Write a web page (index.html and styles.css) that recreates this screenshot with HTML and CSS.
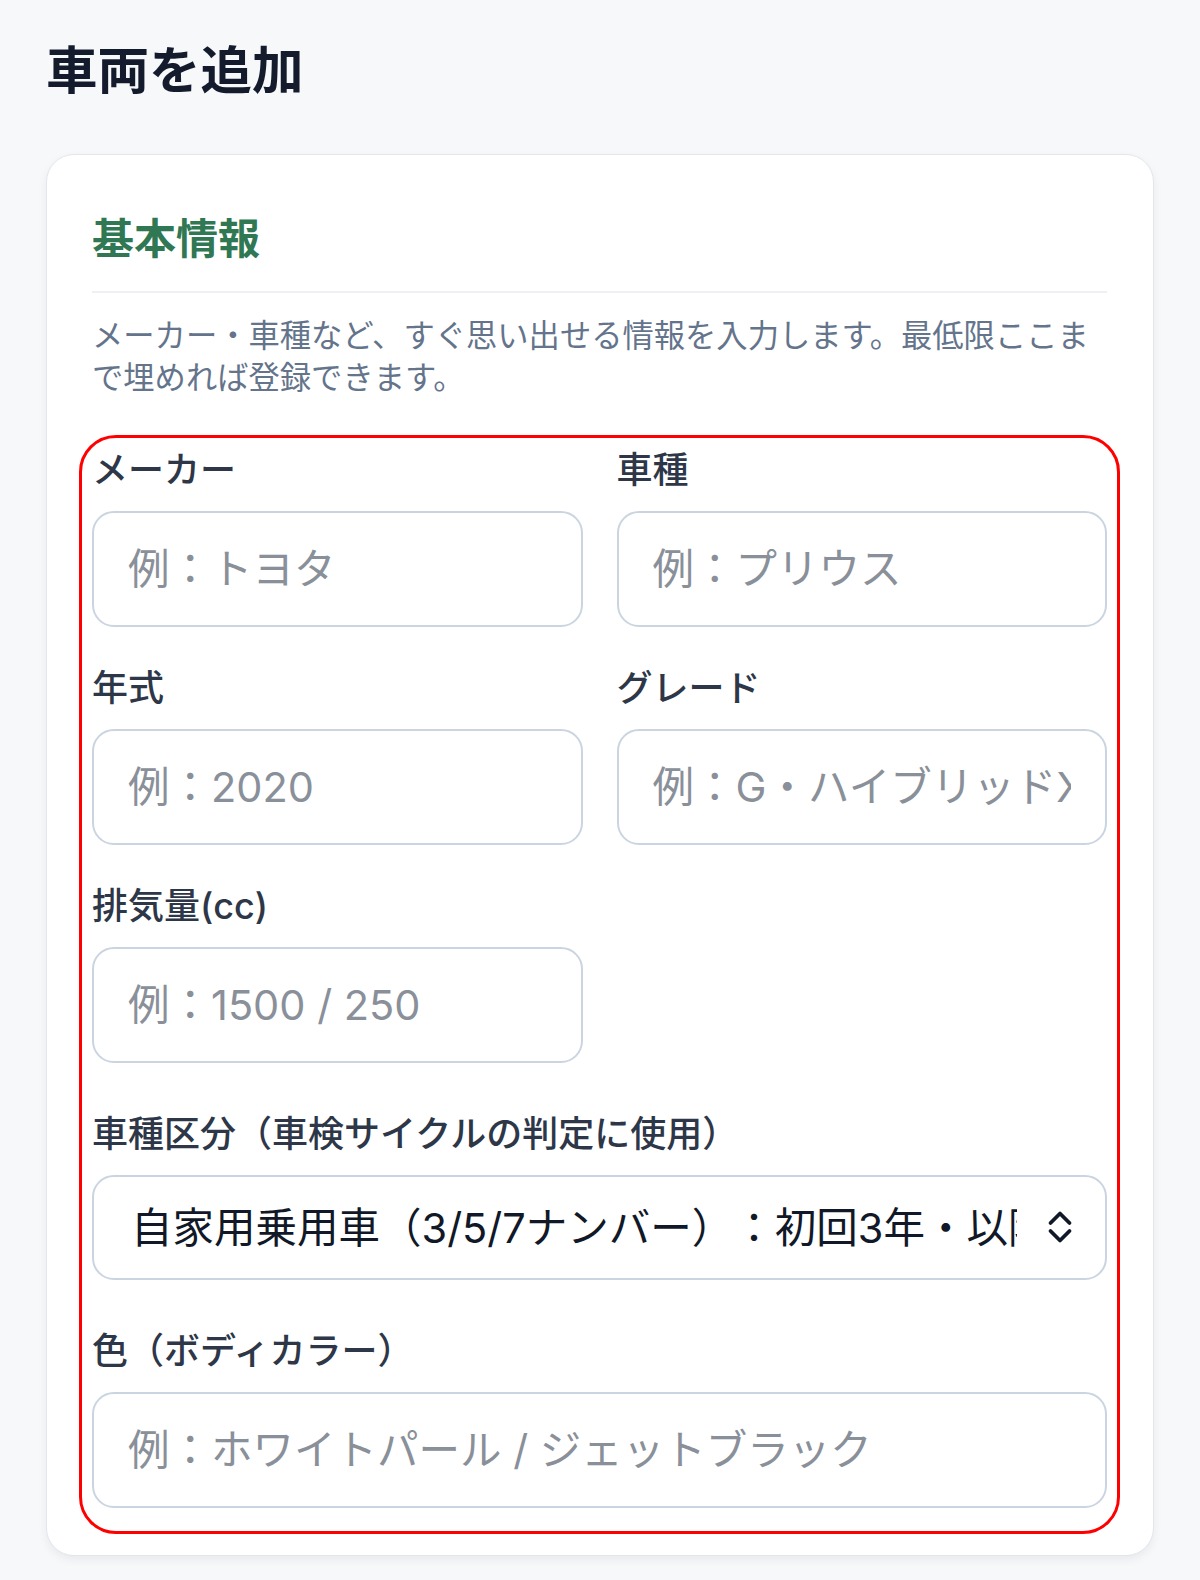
FILE: index.html
```html
<!DOCTYPE html>
<html lang="ja">
<head>
    <meta charset="UTF-8">
    <meta name="viewport" content="width=device-width, initial-scale=1.0">
    <title>車両を追加</title>
    <link rel="stylesheet" href="styles.css">
</head>
<body>
    <main class="page">
        <h1 class="page-title">車両を追加</h1>

        <section class="card">
            <h2 class="section-title">基本情報</h2>
            <p class="section-desc">メーカー・車種など、すぐ思い出せる情報を入力します。最低限ここまで埋めれば登録できます。</p>

            <form class="fields">
                <div class="field">
                    <label for="maker">メーカー</label>
                    <input type="text" id="maker" placeholder="例：トヨタ">
                </div>
                <div class="field">
                    <label for="model">車種</label>
                    <input type="text" id="model" placeholder="例：プリウス">
                </div>
                <div class="field">
                    <label for="year">年式</label>
                    <input type="text" id="year" placeholder="例：2020">
                </div>
                <div class="field">
                    <label for="grade">グレード</label>
                    <input type="text" id="grade" placeholder="例：G・ハイブリッドX">
                </div>
                <div class="field">
                    <label for="cc">排気量(cc)</label>
                    <input type="text" id="cc" placeholder="例：1500 / 250">
                </div>

                <div class="field field-wide">
                    <label for="category">車種区分（車検サイクルの判定に使用）</label>
                    <div class="select-wrap">
                        <select id="category">
                            <option>自家用乗用車（3/5/7ナンバー）：初回3年・以降2年</option>
                            <option>軽自動車：初回3年・以降2年</option>
                            <option>貨物車：毎年</option>
                        </select>
                        <svg class="select-icon" viewBox="0 0 26 34" width="26" height="34">
                            <path d="M3.5 13 L13 3.5 L22.5 13 M3.5 21 L13 30.5 L22.5 21" fill="none" stroke="#111827" stroke-width="3.8" stroke-linecap="round" stroke-linejoin="round"/>
                        </svg>
                    </div>
                </div>

                <div class="field field-wide">
                    <label for="color">色（ボディカラー）</label>
                    <input type="text" id="color" placeholder="例：ホワイトパール / ジェットブラック">
                </div>
            </form>
        </section>
    </main>
</body>
</html>
```

FILE: styles.css
```css
body {
    margin: 0;
    background-color: #f7f8fa;
    font-family: "Inter", "Noto Sans CJK JP", sans-serif;
    color: #111827;
    text-spacing-trim: space-all;
}

.page {
    padding: 34px 46px 40px;
}

.page-title {
    margin: 0 0 48px;
    font-size: 51.5px;
    line-height: 72px;
    font-weight: 700;
    color: #141b2d;
}

.card {
    width: 1108px;
    box-sizing: border-box;
    background: #fff;
    border: 1px solid #e3e6eb;
    border-radius: 28px;
    box-shadow: 0 4px 10px rgba(15, 23, 42, 0.06);
    padding: 44px 46px 34px 45px;
}

.section-title {
    margin: 0;
    padding: 12px 0 24px;
    font-size: 42px;
    line-height: 56px;
    font-weight: 700;
    color: #2f7853;
    border-bottom: 2px solid #eef0f4;
}

.section-desc {
    margin: 22px 0 0;
    font-size: 31.3px;
    line-height: 42px;
    color: #64748b;
}

.fields {
    display: grid;
    grid-template-columns: 1fr 1fr;
    column-gap: 34px;
    row-gap: 39px;
    margin-top: 49px;
    padding-bottom: 13px;
    border-radius: 24px;
    outline: 3px solid #ff0000;
    outline-offset: 10px;
}

.field-wide {
    grid-column: 1 / -1;
    margin-top: 10px;
}

.field label {
    display: block;
    margin-bottom: 19px;
    font-size: 36px;
    line-height: 44px;
    font-weight: 500;
    color: #2d3748;
}

.field input,
.field select {
    display: block;
    width: 100%;
    height: 116px;
    box-sizing: border-box;
    padding: 0 34px;
    border: 2px solid #cbd5e1;
    border-radius: 22px;
    background: #fff;
    font-family: inherit;
    font-size: 41.5px;
    color: #111827;
    outline: none;
    text-spacing-trim: space-all;
}

.field input::placeholder {
    color: #8a9099;
}

.select-wrap {
    position: relative;
}

.field select {
    height: 105px;
    padding: 0 88px 0 37px;
    appearance: none;
    -webkit-appearance: none;
}

.select-icon {
    position: absolute;
    right: 34px;
    top: 35px;
    pointer-events: none;
}
```
